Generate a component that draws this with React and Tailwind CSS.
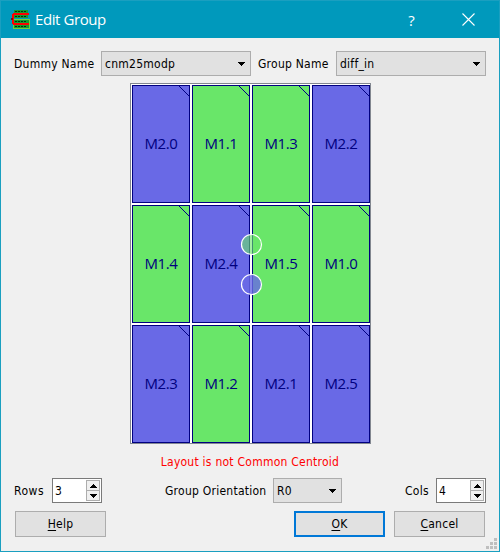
const tahoma = "font-['DejaVu_Sans_Condensed','DejaVu_Sans',sans-serif]";

const cells = ['M2.0', 'M1.1', 'M1.3', 'M2.2', 'M1.4', 'M2.4', 'M1.5', 'M1.0', 'M2.3', 'M1.2', 'M2.1', 'M2.5'];

function Cell({ name }) {
  const blue = name.startsWith('M2');
  return (
    <div className={`relative flex h-[118px] w-[58px] items-center justify-center border border-[#000080] ${blue ? 'bg-[#6969e6]' : 'bg-[#69e669]'}`}>
      <svg className="absolute right-0 top-0" width="10" height="10" shapeRendering="crispEdges">
        <path d="M0 0L10 10" stroke="#000080" />
      </svg>
      <span className="pb-0.5 font-['Open_Sans','Noto_Sans',sans-serif] text-[15px] leading-5 tracking-[-0.4px] text-[#000080]">{name}</span>
    </div>
  );
}

function DownArrow() {
  return (
    <svg width="7" height="4" shapeRendering="crispEdges">
      <path d="M0 0h7v1H0zM1 1h5v1H1zM2 2h3v1H2zM3 3h1v1H3z" />
    </svg>
  );
}

function Combo({ value, width }) {
  return (
    <div className={`flex h-[25px] items-center justify-between border border-[#adadad] bg-[#e1e1e1] pl-[3px] pr-[5px] ${width}`}>
      <span>{value}</span>
      <DownArrow />
    </div>
  );
}

function Spin({ value }) {
  return (
    <div className="flex h-[25px] w-[50px] items-center justify-between border border-[#7a7a7a] bg-white pl-0.5 pr-px">
      <span>{value}</span>
      <div className="flex h-[21px] w-[14px] flex-col border border-[#adadad] bg-[#f0f0f0]">
        <div className="flex h-[10px] items-center justify-center border-b border-[#adadad]">
          <span className="rotate-180"><DownArrow /></span>
        </div>
        <div className="flex flex-1 items-center justify-center"><DownArrow /></div>
      </div>
    </div>
  );
}

function Button({ label, primary }) {
  return (
    <button className={`flex h-[26px] w-[91px] items-center justify-center bg-[#e1e1e1] tracking-[0.24px] ${primary ? 'border-2 border-[#0078d7]' : 'border border-[#adadad]'}`}>
      <span><u className="underline-offset-2">{label[0]}</u>{label.slice(1)}</span>
    </button>
  );
}

function AppIcon() {
  return (
    <svg width="19" height="19" viewBox="0 0 19 19" shapeRendering="crispEdges">
      <path d="M3 0h14v8H3z" fill="#149b30" />
      <path d="M2 9h17v10H2z" fill="#6fce3f" />
      <path d="M3 10h15v8H3z" fill="#149b30" />
      <path d="M4 1.500h12M4 6.500h12M4 11.500h12M4 16.500h12" stroke="#06300c" strokeDasharray="2 1" />
      <path d="M18 4H3L2 5v8l1 1h15" fill="none" stroke="#ff0000" strokeWidth="2" />
      <path d="M0 8h2v2H0z" fill="#7a1010" />
    </svg>
  );
}

export default function App() {
  return (
    <div className={`relative flex h-[552px] w-[500px] flex-col border border-[#1a9fc0] bg-[#f0f0f0] text-[12px] leading-4 tracking-[0.25px] text-black ${tahoma}`}>
      <header className="flex h-[37px] items-center bg-[#0099bc] pl-[10px] text-white">
        <AppIcon />
        <span className="ml-[5px] pb-px font-['Open_Sans',sans-serif] text-[15px] tracking-[-0.42px]">Edit Group</span>
        <span className="ml-auto font-['Open_Sans',sans-serif] text-[15px]">?</span>
        <svg className="ml-[47px] mr-[24px]" width="13" height="13" viewBox="0 0 13 13">
          <path d="M.5 .5l12 12M12.500 .5l-12 12" stroke="white" strokeWidth="1.1" />
        </svg>
      </header>
      <div className="mt-[13px] flex h-[25px] items-center pl-[13px]">
        <span className="w-[87px] whitespace-nowrap">Dummy Name</span>
        <Combo value="cnm25modp" width="w-[150px]" />
        <span className="ml-[7px] w-[78px] whitespace-nowrap">Group Name</span>
        <Combo value="diff_in" width="w-[150px]" />
      </div>
      <div className="relative ml-[129px] mt-[7px] h-[361px] w-[241px] border border-[#828790] bg-white pl-px pt-px">
        <div className="grid grid-cols-[repeat(4,58px)] gap-0.5">
          {cells.map((name) => <Cell key={name} name={name} />)}
        </div>
        <svg className="absolute left-[109px] top-[149px]" width="23" height="63">
          <circle cx="11.500" cy="11.500" r="10" fill="#69e669" fillOpacity=".6" stroke="white" strokeWidth="1.2" />
          <circle cx="11.500" cy="51.500" r="10" fill="#6969e6" fillOpacity=".8" stroke="white" strokeWidth="1.2" />
        </svg>
      </div>
      <div className="mt-[10px] text-center text-[#ff0000]">Layout is not Common Centroid</div>
      <div className="mt-2 flex h-[25px] items-center pl-[13px]">
        <span className="w-[38px] tracking-[0.5px]">Rows</span>
        <Spin value="3" />
        <span className="ml-[63px] w-[108px] whitespace-nowrap">Group Orientation</span>
        <Combo value="R0" width="w-[69px]" />
        <span className="ml-[63px] w-[31px]">Cols</span>
        <Spin value="4" />
      </div>
      <div className="mt-2 flex pl-[14px]">
        <Button label="Help" />
        <div className="ml-[188px] flex gap-[9px]">
          <Button label="OK" primary />
          <Button label="Cancel" />
        </div>
      </div>
      <svg className="absolute bottom-0.5 right-0.5" width="11" height="11" fill="#bfbfbf" shapeRendering="crispEdges">
        <path d="M8 0h3v3H8zM4 4h3v3H4zM8 4h3v3H8zM0 8h3v3H0zM4 8h3v3H4zM8 8h3v3H8z" />
      </svg>
    </div>
  );
}
